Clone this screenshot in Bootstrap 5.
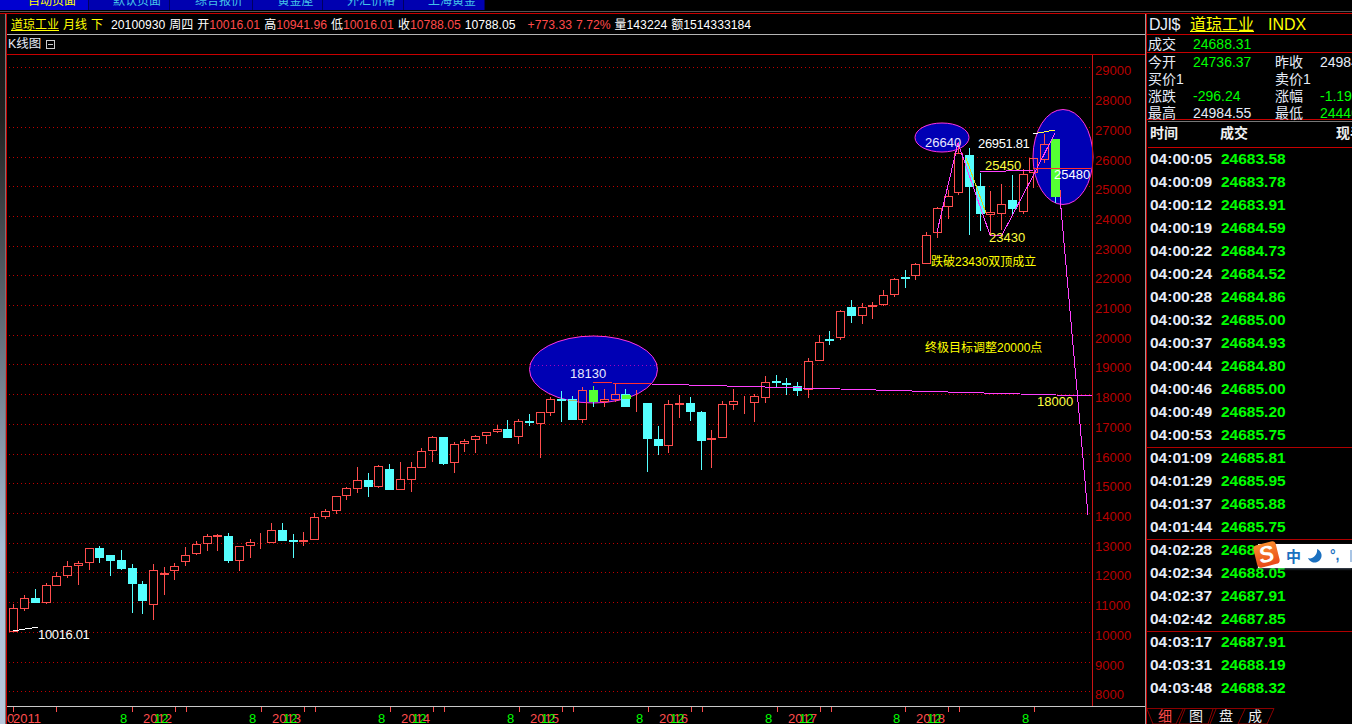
<!DOCTYPE html>
<html lang="zh-CN">
<head>
    <meta charset="UTF-8" />
    <meta name="viewport" content="width=device-width, initial-scale=1" />
    <title>道琼工业 月线</title>
    <link href="https://cdn.jsdelivr.net/npm/bootstrap@5.3.3/dist/css/bootstrap.min.css" rel="stylesheet" />
    <style>
        html, body {
            width: 1352px;
            height: 724px;
            overflow: hidden;
            background: #000;
        }
        body {
            font-family: "Liberation Sans", "Noto Sans CJK SC", sans-serif;
            color: #e6ecf8;
            position: relative;
        }
        /* top page tabs, cut off by the window edge */
        .page-tabs { height: 10px; overflow: hidden; }
        .page-tab {
            height: 10px;
            background: #0000b0;
            border-right: 1px solid #000060;
            color: #45c4e8;
            font-size: 12px;
            line-height: 10px;
            text-align: center;
            padding-left: 16px;
        }
        .page-tab span { position: relative; top: -4px; }
        .page-tab.on { color: #ffff00; background: #0000d0; }
        .win-line { height: 1px; margin-top: 1px; background: #555; }
        .win-body { height: 712px; margin-top: 1px; border-top: 1px solid #c80000; }
        .side-strip {
            width: 5px;
            background: linear-gradient(#111 0, #222 15%, #a8bcd4 75%, #b8c8dc 100%);
        }
        .left-edge { width: 2px; border-left: 1px solid #777; border-right: 1px solid #c80000; }
        .main-col { width: 1139px; border-right: 1px solid #999; }
        .quote-bar {
            height: 21px;
            border-bottom: 1px solid #b4b4b4;
            font-size: 12.2px;
            line-height: 22px;
            padding-left: 4px;
            white-space: nowrap;
            column-gap: 4px;
        }
        .cn { font-size: 12px; }
        .y { color: #ffff00; }
        .u { text-decoration: underline; }
        .r { color: #ff4a4a; }
        .g { color: #00ff00; }
        .chart-title {
            height: 20px;
            border-bottom: 1px solid #c80000;
            font-size: 12.5px;
            line-height: 19px;
            padding-left: 1px;
            color: #e6ecf8;
        }
        .fold-box {
            width: 9px;
            height: 9px;
            margin-left: 5px;
            border: 1px solid #ccc;
            position: relative;
        }
        .fold-box::after {
            content: "";
            position: absolute;
            left: 1px;
            right: 1px;
            top: 3px;
            height: 1px;
            background: #ccc;
        }
        #kline { display: block; }
        #kline text { font-family: "Liberation Sans", "Noto Sans CJK SC", sans-serif; font-size: 13px; }
        #kline .cn-note { font-size: 12px; }
        #kline .tight { letter-spacing: -.35px; }

        .quote-panel { width: 206px; border-left: 1px solid #c80000; }
        .panel-title {
            height: 21px;
            border-bottom: 1px solid #c80000;
            font-size: 16px;
            line-height: 22px;
            padding-left: 2px;
            white-space: nowrap;
        }
        .panel-title .sym { width: 41px; letter-spacing: -.5px; }
        .panel-title .name { width: 78px; }
        .info-row {
            display: grid;
            grid-template-columns: 45px 82px 45px 60px;
            font-size: 14px;
            height: 17px;
            line-height: 18px;
            padding-left: 1px;
            white-space: nowrap;
        }
        .info-first { height: 18px; border-bottom: 1px solid #c80000; }
        .info-last { height: 67px; border-bottom: 1px solid #c80000; }
        .tick-head {
            margin-top: 1px;
            height: 27px;
            border-top: 1px solid #777;
            border-bottom: 1px solid #c80000;
            margin-left: 1px;
            padding-left: 2px;
            font-size: 14px;
            font-weight: 700;
            line-height: 23px;
            color: #f0f0f0;
            white-space: nowrap;
        }
        .tick-row {
            height: 23px;
            line-height: 23px;
            font-size: 15.5px;
            font-weight: 700;
            padding-left: 3px;
            white-space: nowrap;
        }
        .tick-time { width: 71px; }
        .tick-list { margin-top: -1px; }
        .tick-sep { height: 1px; margin: 1px 0 -2px; background: #b00000; position: relative; }
        .detail-tabs { margin-top: auto; flex-shrink: 0; display: block; }
        .detail-tabs text { font-family: "Noto Sans CJK SC", sans-serif; font-size: 14px; }

        /* input method bar floating over the list */
        .ime-bar {
            position: absolute;
            left: 1258px;
            top: 544px;
            width: 94px;
            height: 24px;
            background: #fff;
            box-shadow: 0 1px 2px rgba(120, 140, 170, .6);
            color: #1a70c0;
        }
        .ime-logo {
            position: absolute;
            left: 1255px;
            top: 543px;
            width: 23px;
            height: 23px;
            border-radius: 4px;
            transform: rotate(-14deg);
            background: linear-gradient(#f98b2c, #e8481a);
            color: #fff;
            font: italic 700 23px/23px "Liberation Sans", sans-serif;
            text-align: center;
        }
        .ime-zh { position: absolute; left: 28px; top: 0; font: 700 15px/24px "Noto Sans CJK SC", sans-serif; }
        .ime-moon { position: absolute; left: 50px; top: 5px; }
        .ime-punct { position: absolute; left: 72px; top: 0; font: 700 14px/22px "Liberation Sans", sans-serif; }
        .ime-end { position: absolute; left: 92px; top: 6px; width: 2px; height: 12px; background: #a8c4e4; }
    </style>
</head>
<body>
    <div class="page-tabs d-flex">
        <div class="page-tab on" style="width:89px"><span>自动页面</span></div>
        <div class="page-tab" style="width:81px"><span>默认页面</span></div>
        <div class="page-tab" style="width:83px"><span>综合报价</span></div>
        <div class="page-tab" style="width:70px"><span>黄金屋</span></div>
        <div class="page-tab" style="width:81px"><span>外汇价格</span></div>
        <div class="page-tab" style="width:81px"><span>上海黄金</span></div>
    </div>
    <div class="win-line"></div>

    <div class="win-body d-flex">
        <div class="side-strip"></div>
        <div class="left-edge"></div>

        <div class="main-col d-flex flex-column">
            <div class="quote-bar d-flex text-white">
                <span class="y u cn">道琼工业</span>
                <span class="y cn">月线</span>
                <span class="y cn">下</span>
                <span class="ms-1">20100930</span>
                <span class="cn">周四</span>
                <span><span class="cn">开</span><span class="r">10016.01</span></span>
                <span><span class="cn">高</span><span class="r">10941.96</span></span>
                <span><span class="cn">低</span><span class="r">10016.01</span></span>
                <span><span class="cn">收</span><span class="r">10788.05</span></span>
                <span>10788.05</span>
                <span class="r ms-2">+773.33</span>
                <span class="r">7.72%</span>
                <span><span class="cn">量</span>143224</span>
                <span><span class="cn">额</span>1514333184</span>
            </div>
            <div class="chart-title d-flex align-items-center">
                <span>K线图</span>
                <span class="fold-box"></span>
            </div>
            <svg id="kline" width="1138" height="669" viewBox="7 55 1138 669" xmlns="http://www.w3.org/2000/svg"></svg>
        </div>

        <div class="quote-panel d-flex flex-column overflow-hidden">
            <div class="panel-title d-flex">
                <span class="sym">DJI$</span>
                <span class="name y u">道琼工业</span>
                <span class="y">INDX</span>
            </div>
            <div class="info-row info-first"><span>成交</span><span class="g">24688.31</span></div>
            <div class="info-last">
                <div class="info-row"><span>今开</span><span class="g">24736.37</span><span>昨收</span><span>24984.55</span></div>
                <div class="info-row"><span>买价1</span><span></span><span>卖价1</span><span></span></div>
                <div class="info-row"><span>涨跌</span><span class="g">-296.24</span><span>涨幅</span><span class="g">-1.19%</span></div>
                <div class="info-row"><span>最高</span><span>24984.55</span><span>最低</span><span class="g">24440.32</span></div>
            </div>
            <div class="tick-head d-flex">
                <span class="flex-shrink-0" style="width:70px">时间</span>
                <span class="flex-shrink-0" style="width:116px">成交</span>
                <span class="flex-shrink-0">现手</span>
            </div>
            <div class="tick-list" id="ticks"></div>
            <svg class="detail-tabs" width="205" height="17" viewBox="1147 707 205 17" xmlns="http://www.w3.org/2000/svg">
                <path d="M1147 707.5H1274L1267 723H1238L1245 708M1213 708L1208 723H1179L1185 708M1210 723L1216 708M1183 708L1176 723H1153L1147 708" fill="none" stroke="#8a0000" />
                <text x="1158" y="720" fill="#ff4a4a">细</text>
                <text x="1189" y="720" fill="#f0f0f0">图</text>
                <text x="1219" y="720" fill="#f0f0f0">盘</text>
                <text x="1248" y="720" fill="#f0f0f0">成</text>
            </svg>
        </div>
    </div>

    <div class="ime-bar">
        <span class="ime-zh">中</span>
        <svg class="ime-moon" width="14" height="14" viewBox="0 0 14 14"><path d="M9 0a7 7 0 1 1-9 9c4 2 10-3 9-9z" fill="#1a70c0" /></svg>
        <span class="ime-punct">°,</span>
        <span class="ime-end"></span>
    </div>
    <div class="ime-logo">S</div>

    <script src="https://cdn.jsdelivr.net/npm/bootstrap@5.3.3/dist/js/bootstrap.bundle.min.js"></script>
    <script>
        const svg = document.getElementById('kline');
        let out = '';

        const RED = '#ff4d4d', CYAN = '#55ffff', GREEN = '#55ff33', PINK = '#ff40ff';
        const gridY = (p) => 691.3 - (p - 8000) * 0.02971;

        function line(x1, y1, x2, y2, color) {
            out += `<line x1="${x1}" y1="${y1}" x2="${x2}" y2="${y2}" stroke="${color}" />`;
        }
        function text(x, y, str, color, cls) {
            out += `<text x="${x}" y="${y}" fill="${color}"${cls ? ` class="${cls}"` : ''}>${str}</text>`;
        }

        // grid + price axis
        out += '<g shape-rendering="crispEdges">';
        for (let p = 8000; p <= 29000; p += 1000) {
            const y = Math.round(gridY(p)) + 0.5;
            out += `<line x1="9" y1="${y}" x2="1092" y2="${y}" stroke="#c00000" stroke-dasharray="1 3" />`;
        }
        out += '</g>';
        for (let p = 8000; p <= 29000; p += 1000) {
            text(1095, Math.round(gridY(p)) + 8, p, '#b80000');
        }

        // the hand drawn blue ellipses
        out += `<ellipse cx="942" cy="137.5" rx="27" ry="14.5" fill="#0000b4" stroke="#ff33dd" />`;
        out += `<ellipse cx="1063" cy="157" rx="30" ry="47.5" fill="#0000b4" stroke="#ff33dd" />`;
        out += `<ellipse cx="593.5" cy="369.5" rx="64" ry="33.5" fill="#0000b4" stroke="#ff33dd" />`;
        out += `<line x1="530" y1="365.5" x2="657" y2="365.5" stroke="#a000c0" stroke-dasharray="1 3" shape-rendering="crispEdges" />`;

        // candles as read off the chart: [x, top, bottom, high, low, kind]
        // kind r = hollow red, h = hollow over an ellipse, c = cyan, g = green
        const candles = [];
        function addCandles(ox, oy, rows) {
            rows.forEach((c) => {
                candles.push([ox + c[0] / 3, oy + c[1] / 3, oy + c[2] / 3, oy + c[3] / 3, oy + c[4] / 3, c[5]]);
            });
        }
        addCandles(0, 520, [
            [40,265,332,252,335,'r'],[73,235,263,226,272,'r'],[106,235,245,208,250,'c'],[139,196,245,190,252,'r'],
            [169,169,194,155,194,'r'],[202,139,164,124,174,'r'],[235,130,136,124,194,'r'],[268,85,125,85,150,'r'],
            [298,85,110,78,129,'c'],[331,106,119,106,168,'c'],[364,121,144,91,150,'c'],[397,145,188,133,279,'c'],
            [427,193,239,183,282,'c'],[460,151,253,133,300,'r'],[493,160,161,142,225,'r'],[523,139,151,130,180,'r'],
            [556,106,124,82,137,'r'],[589,73,100,64,105,'r'],[622,49,70,43,93,'r'],[652,46,47,43,93,'r'],
            [685,49,119,40,129,'c'],[718,79,121,79,153,'r'],[751,67,76,58,114,'r'],[781,62,64,40,87,'r'],
            [814,31,67,10,69,'r'],[847,31,59,10,63,'c'],[880,61,64,43,114,'c'],[910,61,64,37,78,'r']
        ]);
        addCandles(290, 460, [
            [73,172,238,160,238,'r'],[106,154,169,147,176,'r'],[139,109,151,109,163,'r'],[169,85,106,82,119,'r']
        ]);
        addCandles(340, 400, [
            [52,241,263,202,278,'r'],[85,241,257,220,290,'c'],[115,199,257,196,263,'r'],[148,208,266,193,270,'c'],
            [181,238,266,186,270,'r'],[214,202,236,186,275,'r'],[244,154,200,145,203,'r'],[277,112,151,109,185,'r'],
            [310,112,188,112,194,'c'],[343,133,187,127,218,'r'],[373,124,130,118,156,'r'],[406,109,118,106,160,'r'],
            [439,97,106,97,131,'r'],[472,88,94,76,100,'r'],[502,88,110,60,110,'c'],[535,64,109,58,131,'r']
        ]);
        addCandles(520, 330, [
            [28,274,277,252,288,'c'],[61,247,278,247,384,'r'],[91,208,245,202,258,'r'],[124,207,209,183,276,'c'],
            [157,208,267,198,270,'c'],[187,181,266,172,279,'h'],[220,181,213,168,231,'g'],[253,208,212,177,231,'r'],
            [286,193,207,160,215,'h'],[316,193,228,178,231,'c'],[349,221,223,180,246,'r'],[382,219,324,219,426,'c'],
            [415,327,345,288,375,'c'],[445,223,344,210,369,'r'],[478,219,221,195,264,'r'],[511,219,243,201,273,'c'],
            [544,246,330,243,420,'c'],[574,325,328,300,414,'r'],[607,223,320,213,324,'r'],[640,214,221,177,240,'r'],
            [673,212,214,198,252,'r'],[703,199,215,192,276,'r'],[736,157,200,138,219,'r'],[769,153,155,135,171,'c'],
            [799,160,163,144,195,'c'],[832,168,180,156,198,'c']
        ]);
        addCandles(790, 240, [
            [55,364,447,354,474,'r'],[88,307,359,285,362,'r'],[118,297,299,273,315,'c'],[151,214,290,211,300,'r'],
            [184,202,225,180,249,'c'],[217,202,224,190,252,'r'],[247,195,197,186,237,'r'],[280,166,191,151,198,'r'],
            [313,118,161,115,171,'r'],[346,111,113,91,144,'c']
        ]);
        addCandles(900, 100, [
            [46,493,526,490,540,'r'],[79,406,488,397,490,'r'],[112,325,397,322,415,'r'],[145,287,319,270,356,'r'],
            [175,160,275,127,285,'r'],[208,166,258,145,405,'c'],[241,258,338,220,393,'c'],[271,337,341,273,405,'r'],
            [304,313,338,252,390,'r'],[337,300,323,226,347,'c'],[370,223,334,208,342,'r'],[400,175,217,175,263,'h'],
            [433,131,178,103,190,'h'],[466,118,288,118,308,'g']
        ]);

        const stroke = { r: RED, h: RED, c: CYAN, g: GREEN };
        const fill = { r: '#000', h: 'none', c: CYAN, g: GREEN };
        out += '<g shape-rendering="crispEdges">';
        candles.forEach(([x, top, bot, hi, lo, kind]) => {
            const cx = Math.round(x) + 0.5;
            const t = Math.round(top) + 0.5;
            const b = Math.round(bot) + 0.5;
            if (hi < t) line(cx, Math.round(hi), cx, t, kind === 'g' ? GREEN : stroke[kind]);
            if (lo > b) line(cx, b, cx, Math.round(lo), kind === 'g' ? CYAN : stroke[kind]);
            out += `<rect x="${cx - 4}" y="${t}" width="8" height="${b - t}" fill="${fill[kind]}" stroke="${stroke[kind]}" />`;
        });
        // bits of candle that change colour where they cross an ellipse
        out += `<rect x="622" y="395" width="9" height="4" fill="${GREEN}" />`;
        out += `<rect x="569" y="400" width="8" height="1" fill="#a0c070" />`;
        out += `<rect x="793" y="387" width="8" height="1" fill="#c0a040" />`;
        line(1060.5, 190, 1060.5, 202, RED);
        out += '</g>';

        // drawn trend lines
        out += '<g fill="none" shape-rendering="crispEdges">';
        out += `<polyline points="937,232 958,143 990,235 1002,235 1033,176 1055,133" stroke="${PINK}" />`;
        out += `<polyline points="980,172 1033,170" stroke="${PINK}" />`;
        out += `<polyline points="966,158 986,213" stroke="#d8d820" />`;
        out += `<polyline points="1033,169 1092,168" stroke="#ff3030" />`;
        out += `<polyline points="1060,197 1088,515" stroke="${PINK}" />`;
        out += `<polyline points="1033,134 1038,133" stroke="#fff" />`;
        out += `<polyline points="1038,133 1055,130" stroke="#ffff40" />`;
        out += `<polyline points="651,384 840,389 1092,396" stroke="${PINK}" />`;
        out += `<polyline points="593,382 612,382" stroke="#ff3030" />`;
        out += `<polyline points="612,383 651,384" stroke="#ff3030" />`;
        out += `<polyline points="13,631 38,627" stroke="#fff" />`;
        out += '</g>';

        // price axis line + bottom time axis
        out += '<g shape-rendering="crispEdges">';
        line(1092.5, 55, 1092.5, 706, '#c81414');
        line(7, 706.5, 1145, 706.5, '#c8c8c8');
        [13, 56].forEach((x) => line(x + 0.5, 707, x + 0.5, 712, RED));
        for (let k = 0; k < 8; k++) {
            const x = 132 + Math.round(k * 128.9);
            line(x + 0.5, 707, x + 0.5, 712, RED);
            if (k < 7) {
                line(x + 43.5, 707, x + 43.5, 712, RED);
                line(x + 54.5, 707, x + 54.5, 712, RED);
            }
        }
        out += '</g>';
        text(7, 723, '0', RED);
        text(13, 723, '2011', RED);
        for (let k = 0; k < 8; k++) {
            const dx = Math.round(k * 128.9);
            text(120 + dx, 723, '8', '#00ff00');
            if (k < 7) {
                text(143 + dx, 723, 2012 + k, RED);
                text(154 + dx, 723, '12', '#00ff00');
            }
        }

        // notes written on the chart
        text(38, 639, '10016.01', '#fff', 'tight');
        text(570, 378, '18130', '#e8e8ff');
        text(1037, 406, '18000', '#ffff40');
        text(925, 147, '26640', '#e8e8ff');
        text(978, 148, '26951.81', '#fff', 'tight');
        text(985, 170, '25450', '#ffff40');
        text(1054, 179, '25480', '#fff');
        text(989, 242, '23430', '#ffff40');
        text(931, 266, '跌破23430双顶成立', '#ffff00', 'cn-note');
        text(925, 352, '终极目标调整20000点', '#ffff00', 'cn-note');
        svg.innerHTML = out;

        // tick list, groups separated by a red rule
        const tickGroups = [
            [['04:00:05','24683.58'],['04:00:09','24683.78'],['04:00:12','24683.91'],['04:00:19','24684.59'],
             ['04:00:22','24684.73'],['04:00:24','24684.52'],['04:00:28','24684.86'],['04:00:32','24685.00'],
             ['04:00:37','24684.93'],['04:00:44','24684.80'],['04:00:46','24685.00'],['04:00:49','24685.20'],
             ['04:00:53','24685.75']],
            [['04:01:09','24685.81'],['04:01:29','24685.95'],['04:01:37','24685.88'],['04:01:44','24685.75']],
            [['04:02:28','24688.00'],['04:02:34','24688.05'],['04:02:37','24687.91'],['04:02:42','24687.85']],
            [['04:03:17','24687.91'],['04:03:31','24688.19'],['04:03:48','24688.32']]
        ];
        document.getElementById('ticks').innerHTML = tickGroups.map((group) =>
            group.map(([t, p]) => `<div class="tick-row d-flex"><span class="tick-time">${t}</span><span class="g">${p}</span></div>`).join('')
        ).join('<div class="tick-sep"></div>');
    </script>
</body>
</html>
